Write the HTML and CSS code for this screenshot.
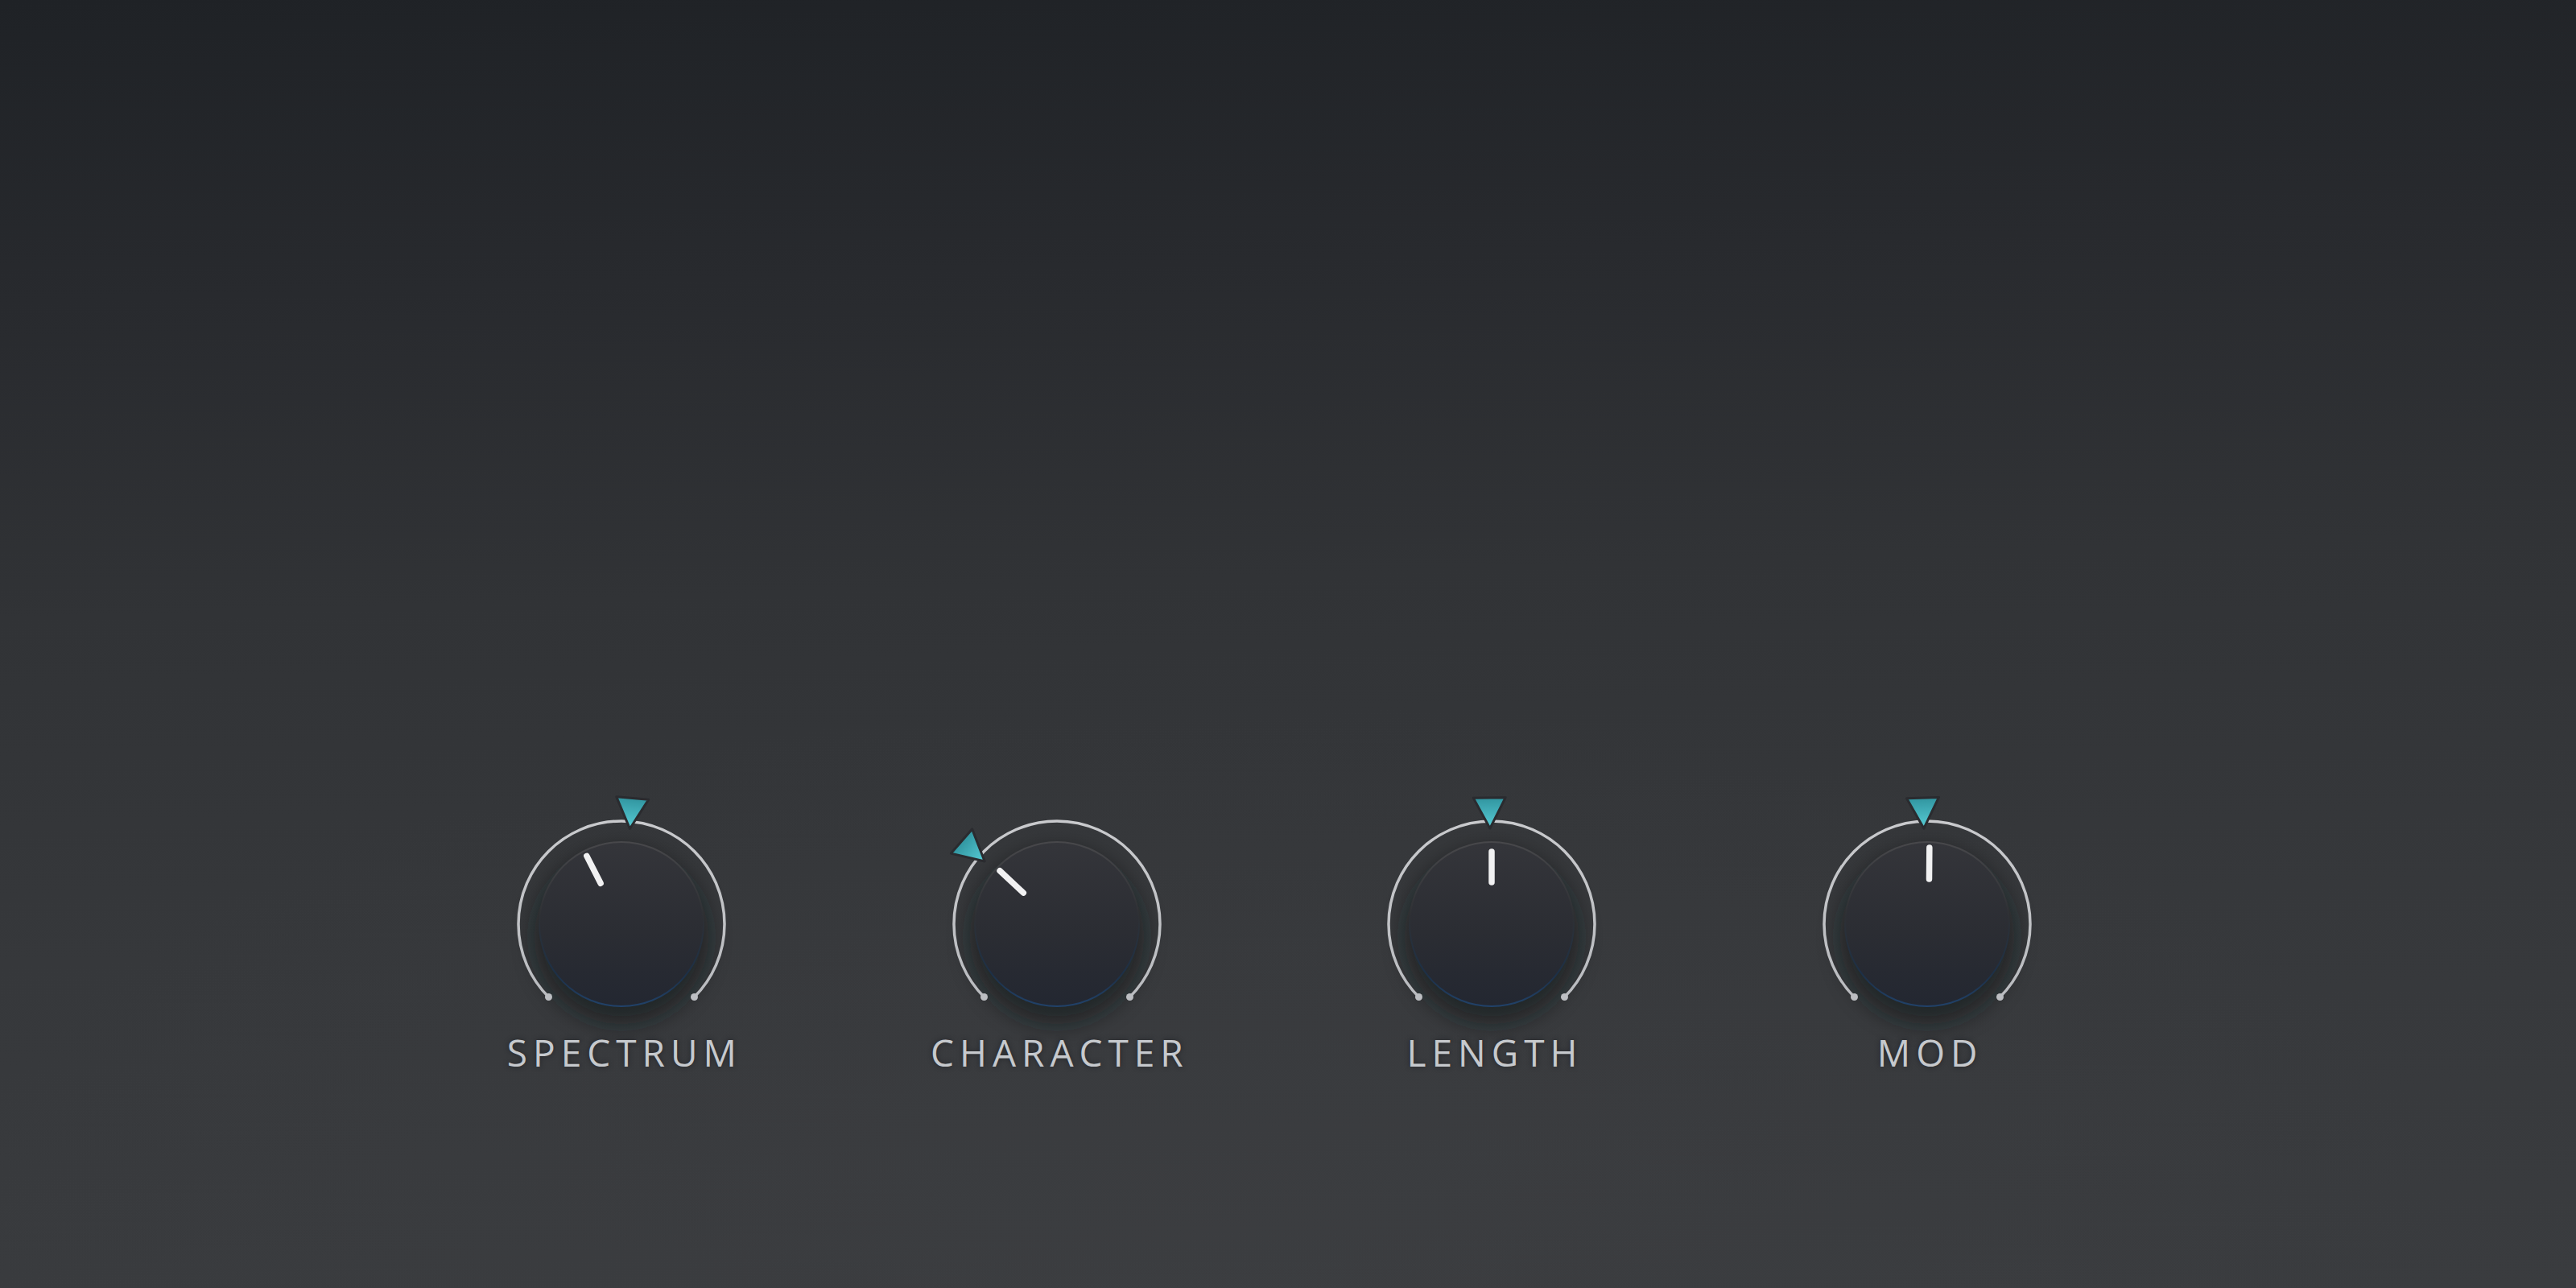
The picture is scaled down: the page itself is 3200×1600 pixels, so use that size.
FILE: index.html
```html
<!DOCTYPE html>
<html lang="en">
<head>
<meta charset="utf-8">
<title>Knobs</title>
<link rel="stylesheet" href="styles.css">
</head>
<body>
<svg class="defs" width="0" height="0" aria-hidden="true">
  <defs>
    <linearGradient id="bodyGrad" x1="0" y1="0" x2="0" y2="1">
      <stop offset="0" stop-color="#34353a"/>
      <stop offset="0.55" stop-color="#2b2d33"/>
      <stop offset="1" stop-color="#232731"/>
    </linearGradient>
    <linearGradient id="rimGrad" x1="0" y1="0" x2="0" y2="1">
      <stop offset="0" stop-color="#48484b"/>
      <stop offset="0.45" stop-color="#2e3034"/>
      <stop offset="0.8" stop-color="#1d3047"/>
      <stop offset="1" stop-color="#21426a"/>
    </linearGradient>
    <linearGradient id="arcGrad" x1="0" y1="0" x2="0" y2="1">
      <stop offset="0" stop-color="#c9cacd"/>
      <stop offset="1" stop-color="#b9bbbf"/>
    </linearGradient>
    <linearGradient id="triGrad" x1="0" y1="0" x2="0" y2="1">
      <stop offset="0" stop-color="#3195a0"/>
      <stop offset="1" stop-color="#58cdd6"/>
    </linearGradient>
    <filter id="shadow" x="-50%" y="-50%" width="200%" height="200%">
      <feGaussianBlur stdDeviation="14"/>
    </filter>
    <filter id="soft" x="-20%" y="-20%" width="140%" height="140%">
      <feGaussianBlur stdDeviation="0.6"/>
    </filter>
  </defs>
</svg>

<main class="panel">
  <section class="knobs">
    <div class="knob">
      <svg class="dial" viewBox="0 0 340 300" width="340" height="300">
        <circle cx="170" cy="186" r="108" fill="#111317" opacity="0.55" filter="url(#shadow)"/>
        <path d="M79.5 260.5 A128 128 0 1 1 260.5 260.5" fill="none" stroke="url(#arcGrad)" stroke-width="3.5" stroke-linecap="round" filter="url(#soft)"/>
        <circle cx="79.5" cy="260.5" r="4.5" fill="#bcbec2"/>
        <circle cx="260.5" cy="260.5" r="4.5" fill="#bcbec2"/>
        <circle cx="170" cy="170" r="103" fill="url(#rimGrad)"/>
        <circle cx="170" cy="170" r="101" fill="url(#bodyGrad)"/>
        <g transform="rotate(5 170 170)">
          <polygon points="170,51 150,13 190,13" fill="url(#triGrad)" stroke="#2a2b2f" stroke-width="3" stroke-linejoin="round"/>
        </g>
        <g transform="rotate(-27 170 170)">
          <line x1="170" y1="75" x2="170" y2="113" stroke="#f1f1f2" stroke-width="7.5" stroke-linecap="round"/>
        </g>
      </svg>
      <div class="label">SPECTRUM</div>
    </div>

    <div class="knob">
      <svg class="dial" viewBox="0 0 340 300" width="340" height="300">
        <circle cx="170" cy="186" r="108" fill="#111317" opacity="0.55" filter="url(#shadow)"/>
        <path d="M79.5 260.5 A128 128 0 1 1 260.5 260.5" fill="none" stroke="url(#arcGrad)" stroke-width="3.5" stroke-linecap="round" filter="url(#soft)"/>
        <circle cx="79.5" cy="260.5" r="4.5" fill="#bcbec2"/>
        <circle cx="260.5" cy="260.5" r="4.5" fill="#bcbec2"/>
        <circle cx="170" cy="170" r="103" fill="url(#rimGrad)"/>
        <circle cx="170" cy="170" r="101" fill="url(#bodyGrad)"/>
        <g transform="rotate(-49 170 170)">
          <polygon points="170,51 150,13 190,13" fill="url(#triGrad)" stroke="#2a2b2f" stroke-width="3" stroke-linejoin="round"/>
        </g>
        <g transform="rotate(-47 170 170)">
          <line x1="170" y1="73" x2="170" y2="113" stroke="#f1f1f2" stroke-width="7.5" stroke-linecap="round"/>
        </g>
      </svg>
      <div class="label">CHARACTER</div>
    </div>

    <div class="knob">
      <svg class="dial" viewBox="0 0 340 300" width="340" height="300">
        <circle cx="170" cy="186" r="108" fill="#111317" opacity="0.55" filter="url(#shadow)"/>
        <path d="M79.5 260.5 A128 128 0 1 1 260.5 260.5" fill="none" stroke="url(#arcGrad)" stroke-width="3.5" stroke-linecap="round" filter="url(#soft)"/>
        <circle cx="79.5" cy="260.5" r="4.5" fill="#bcbec2"/>
        <circle cx="260.5" cy="260.5" r="4.5" fill="#bcbec2"/>
        <circle cx="170" cy="170" r="103" fill="url(#rimGrad)"/>
        <circle cx="170" cy="170" r="101" fill="url(#bodyGrad)"/>
        <g transform="rotate(-1 170 170)">
          <polygon points="170,51 150,13 190,13" fill="url(#triGrad)" stroke="#2a2b2f" stroke-width="3" stroke-linejoin="round"/>
        </g>
        <g transform="rotate(0 170 170)">
          <line x1="170" y1="80" x2="170" y2="118" stroke="#f1f1f2" stroke-width="7.5" stroke-linecap="round"/>
        </g>
      </svg>
      <div class="label">LENGTH</div>
    </div>

    <div class="knob">
      <svg class="dial" viewBox="0 0 340 300" width="340" height="300">
        <circle cx="170" cy="186" r="108" fill="#111317" opacity="0.55" filter="url(#shadow)"/>
        <path d="M79.5 260.5 A128 128 0 1 1 260.5 260.5" fill="none" stroke="url(#arcGrad)" stroke-width="3.5" stroke-linecap="round" filter="url(#soft)"/>
        <circle cx="79.5" cy="260.5" r="4.5" fill="#bcbec2"/>
        <circle cx="260.5" cy="260.5" r="4.5" fill="#bcbec2"/>
        <circle cx="170" cy="170" r="103" fill="url(#rimGrad)"/>
        <circle cx="170" cy="170" r="101" fill="url(#bodyGrad)"/>
        <g transform="rotate(-2 170 170)">
          <polygon points="170,51 150,13 190,13" fill="url(#triGrad)" stroke="#2a2b2f" stroke-width="3" stroke-linejoin="round"/>
        </g>
        <g transform="rotate(0.5 170 170)">
          <line x1="172" y1="75" x2="172" y2="114" stroke="#f1f1f2" stroke-width="7.5" stroke-linecap="round"/>
        </g>
      </svg>
      <div class="label">MOD</div>
    </div>
  </section>
</main>
</body>
</html>
```

FILE: styles.css
```css
html, body {
  margin: 0;
  padding: 0;
}

body {
  width: 3200px;
  height: 1600px;
  overflow: hidden;
  background:
    radial-gradient(ellipse 2200px 900px at 1500px 1500px, rgba(64, 65, 68, 0.35), rgba(64, 65, 68, 0) 70%),
    linear-gradient(178deg, #1f2226 0%, #282a2e 22%, #313336 45%, #36383b 70%, #3a3c3f 100%);
  font-family: "Open Sans", "Liberation Sans", sans-serif;
}

.defs {
  position: absolute;
  width: 0;
  height: 0;
}

.panel {
  display: flex;
  flex-direction: column;
  height: 1600px;
  box-sizing: border-box;
  padding-top: 978px;
}

.knobs {
  display: flex;
  flex-direction: row;
  margin-left: 502px;
}

.knob {
  width: 540.6px;
  display: flex;
  flex-direction: column;
  align-items: center;
}

.dial {
  display: block;
  overflow: visible;
}

.label {
  margin-top: 6px;
  font-size: 46px;
  line-height: 46px;
  font-weight: 400;
  letter-spacing: 7px;
  margin-right: -7px;
  color: #c6c9cd;
  text-shadow: 0 0 6px rgba(20, 22, 26, 0.6);
}
```
